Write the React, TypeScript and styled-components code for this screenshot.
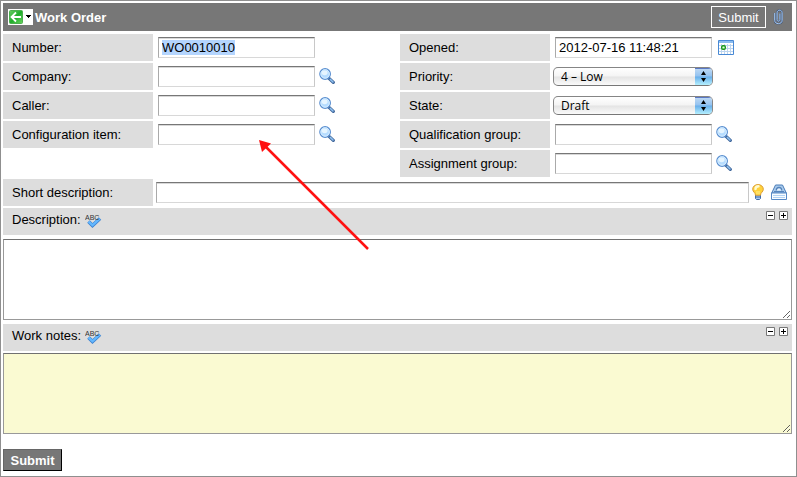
import React, { useEffect, useRef } from 'react';
import styled, { createGlobalStyle, css } from 'styled-components';

const GlobalStyle = createGlobalStyle`
  *, *::before, *::after { box-sizing: border-box; }
  body {
    margin: 0;
    background: #fff;
    color: #000;
    font: 13px/15px "Liberation Sans", Arial, Helvetica, sans-serif;
  }
`;

const Page = styled.main`
  position: relative;
  min-height: 100vh;
  padding: 2px 4px 5px 2px;
  border: 1px solid #8f8f8f;
`;

const TitleBar = styled.header`
  display: flex;
  align-items: center;
  height: 28px;
  margin-bottom: 3px;
  padding: 0 8px 0 5px;
  background: #777;
  color: #fff;
`;

const Title = styled.h1`
  flex: 1;
  margin: 0 0 0 2px;
  font-size: 13px;
  line-height: 15px;
`;

const IconButton = styled.button`
  display: flex;
  flex: none;
  padding: 0;
  border: 0;
  background: none;
  cursor: pointer;
  svg { display: block; }
`;

const BackButton = styled(IconButton)`
  align-items: center;
  width: 25px;
  height: 16px;
  background: #fff;
`;

const HeaderSubmit = styled.button`
  min-width: 55px;
  height: 22px;
  margin-right: 7px;
  padding: 0 6px;
  border: 1px solid #fff;
  background: #777;
  color: #fff;
  font: inherit;
  cursor: pointer;
`;

const Columns = styled.div`
  display: grid;
  grid-template-columns: 1fr 1fr;
  gap: 5px;
  margin-bottom: 2px;
`;

const Column = styled.div`
  display: flex;
  flex-direction: column;
  gap: 2px;
`;

const Row = styled.div<{ $gap?: number }>`
  display: flex;
  align-items: center;
  gap: ${({ $gap = 5 }) => $gap}px;
  min-height: 27px;
  margin-bottom: 0;
`;

const Label = styled.label`
  flex: none;
  width: 150px;
  padding: 6px 9px;
  background: #ddd;
`;

const Field = styled.div<{ $gap?: number; $grow?: boolean }>`
  display: flex;
  align-items: center;
  gap: ${({ $gap = 4 }) => $gap}px;
  ${({ $grow }) => $grow && css`
    flex: 1;
    padding-right: 5px;
  `}
`;

const TextInput = styled.input<{ $grow?: boolean }>`
  width: 157px;
  height: 21px;
  padding: 0 3px;
  border: 1px solid;
  border-color: #777 #c8c8c8 #d8d8d8 #aaa;
  border-radius: 0;
  background: #fff;
  box-shadow: inset 0 1px 0 #d8d8d8;
  color: #000;
  font: inherit;
  outline: 0;
  ${({ $grow }) => $grow && css`flex: 1; min-width: 0;`}
  &::selection { background: #b4d5fe; color: #000; }
`;

const SelectBox = styled.span`
  display: inline-grid;
  grid-template: 17px / 1fr;
  width: 160px;
  height: 19px;
  overflow: hidden;
  border: 1px solid;
  border-color: #858585 #888 #777;
  border-radius: 5px;
  background: linear-gradient(#fff 0%, #f4f4f4 48%, #e4e4e4 52%, #fafafa 100%);
  > * { grid-area: 1 / 1; }
`;

const Select = styled.select`
  appearance: none;
  width: 100%;
  padding: 0 24px 0 7px;
  border: 0;
  background: none;
  color: #000;
  font: 12px/16px "Open Sans", "Noto Sans", sans-serif;
  outline: 0;
`;

const Stepper = styled.span`
  display: flex;
  justify-self: end;
  align-items: center;
  justify-content: center;
  width: 17px;
  box-shadow: inset 0 1px 0 #5a78c4;
  background: linear-gradient(#c0daf4 0%, #94c2ef 48%, #68aeea 52%, #b4f0ff 100%);
  pointer-events: none;
`;

const SectionHead = styled.div`
  display: flex;
  align-items: flex-start;
  height: 27px;
  padding: 4px 4px 0 9px;
  background: #ddd;
`;

const Spelling = styled(IconButton)`
  margin: 2px 0 0 4px;
`;

const Sizers = styled.div`
  display: flex;
  gap: 4px;
  margin: -1px 0 0 auto;
`;

const TextArea = styled.textarea<{ $notes?: boolean }>`
  display: block;
  width: 100%;
  height: 81px;
  margin: ${({ $notes }) => ($notes ? '2px 0 15px' : '4px 0')};
  padding: 3px;
  border: 1px solid #999;
  border-top-color: #707070;
  background: ${({ $notes }) => ($notes ? '#fafad2' : '#fff')};
  font: inherit;
  resize: vertical;
  outline: 0;
`;

const Journals = styled.div`
  margin-top: 2px;
`;

const SubmitButton = styled.button`
  min-width: 59px;
  height: 22px;
  padding: 0 6px;
  border: 1px solid;
  border-color: #666 #000 #000 #666;
  background: #777;
  color: #fff;
  font: bold 13px/15px "Liberation Sans", Arial, sans-serif;
  cursor: pointer;
`;

const Pointer = styled.svg`
  position: absolute;
  left: 256px;
  top: 137px;
  pointer-events: none;
`;

const SearchIcon = () => (
  <svg width="16" height="17" viewBox="0 0 16 17" aria-hidden="true">
    <path d="M9.5 9.8 14.3 14.4" stroke="#3f669a" strokeWidth="3.2" strokeLinecap="round" />
    <path d="M11.3 11.4 14 14" stroke="#8fc0f0" strokeWidth="1.5" strokeLinecap="round" />
    <circle cx="6.1" cy="6" r="5.3" fill="#b5dcff" stroke="#5b8fd0" strokeWidth="1.2" />
    <circle cx="6.1" cy="6" r="4.2" fill="none" stroke="#d9efff" />
    <ellipse cx="5.6" cy="4.8" rx="3" ry="2.4" fill="#e6f5ff" />
  </svg>
);

const BackIcon = () => (
  <svg width="25" height="16" viewBox="0 0 25 16" aria-hidden="true">
    <defs>
      <linearGradient id="green" x1="0" y1="0" x2="1" y2="1">
        <stop offset="0" stopColor="#68cc62" />
        <stop offset=".5" stopColor="#20ad2c" />
        <stop offset="1" stopColor="#69d45e" />
      </linearGradient>
    </defs>
    <rect x="1.5" y="1.5" width="13" height="13" rx="1" fill="url(#green)" stroke="#4cae4e" />
    <path d="M13 8H4M8 3.500 3.500 8 8 12.500" fill="none" stroke="#fff" strokeWidth="1.8" />
    <path d="M18 6h5v1h-1v1h-1v1h-1V8h-1V7h-1z" />
  </svg>
);

const ClipIcon = () => (
  <svg width="11" height="16" viewBox="0 0 11 16" fill="none" aria-hidden="true">
    <path d="M1.7 4v7.4c0 4.3 7.4 4.3 7.4 0V3.7c0-3.3-5-3.3-5 0v7c0 2 2.8 2 2.8 0V4.5" stroke="#46597a" strokeWidth="1.8" />
    <path d="M1.7 4v7.4c0 4.3 7.4 4.3 7.4 0V3.7c0-3.3-5-3.3-5 0v7c0 2 2.8 2 2.8 0V4.5" stroke="#a6cbf5" />
  </svg>
);

const CalendarIcon = () => (
  <svg width="16" height="15" viewBox="0 0 16 15" aria-hidden="true">
    <path d="M.5.5h15v14H.5z" fill="#fff" stroke="#4889d5" />
    <path d="M1 1h14v2H1z" fill="#8bbcf0" />
    <path d="M3.5 4v10M6.5 4v10M9.5 4v10M12.5 4v10M1 5.5h14M1 8.5h14M1 11.5h14" stroke="#bdd5ef" />
    <rect x="3.7" y="5.7" width="3.6" height="3.6" rx="1.2" fill="#dfffd7" stroke="#18961a" strokeWidth="1.4" />
  </svg>
);

const BulbIcon = () => (
  <svg width="12" height="17" viewBox="0 0 12 17" aria-hidden="true">
    <path d="M3.5 11h5v3.5l-1 1h-3l-1-1z" fill="#a9c8ee" stroke="#416caa" />
    <path d="M4 13h4" stroke="#416caa" />
    <path d="M3.5 11.2C3.5 8.5.7 8 .7 5.2.7 2.5 3 .6 6 .6s5.3 1.9 5.3 4.6c0 2.8-2.8 3.3-2.8 6z" fill="#ffd23c" stroke="#dc9d35" />
    <path d="M3.5 5c0-2 1-2.8 3-2.8" fill="none" stroke="#fffbd0" strokeWidth="2.4" strokeLinecap="round" />
    <path d="M5 10.5V7M7 10.5V7" stroke="#fff08b" />
  </svg>
);

const DrawerIcon = () => (
  <svg width="16" height="17" viewBox="0 0 16 17" aria-hidden="true">
    <path d="M4.5 1h7l3.8 8H.7z" fill="#a9caeb" stroke="#4b7db8" />
    <path d="M5.300 6.500c0-4 5.400-4 5.400 0" fill="#e8f4ff" stroke="#5584bc" strokeWidth="1.3" />
    <path d="M3 7.500h10" stroke="#5584bc" />
    <path d="M.5 9h15v6.500H.5z" fill="#f8fcff" stroke="#5689c6" />
    <path d="M2 11.500h12M2 13.500h12" stroke="#b2d2f3" />
  </svg>
);

const SpellIcon = () => (
  <svg width="18" height="15" viewBox="0 0 18 15" aria-hidden="true">
    <path d="m3.5 7.500 4 4 7.500-7" fill="none" stroke="#3d82d0" strokeWidth="3.6" />
    <path d="m3.7 7.600 3.8 3.700 7.200-6.700" fill="none" stroke="#63b8ff" strokeWidth="2.200" />
    <text x="0" y="6" fill="#333" fontFamily="Liberation Sans, sans-serif" fontSize="7">ABC</text>
  </svg>
);

const SizeIcon = ({ plus }: { plus?: boolean }) => (
  <svg width="9" height="9" viewBox="0 0 9 9" aria-hidden="true">
    <path d="M.5.5h8v8h-8z" fill="#fff" stroke="#777" />
    <path d={plus ? 'M2 4.5h5M4.5 2v5' : 'M2 4.5h5'} stroke="#000" />
  </svg>
);

const Lookup = ({ name }: { name: string }) => (
  <IconButton type="button" aria-label={`Look up ${name}`}><SearchIcon /></IconButton>
);

const ReferenceRow = ({ id, name }: { id: string; name: string }) => (
  <Row>
    <Label htmlFor={id}>{name}:</Label>
    <Field>
      <TextInput id={id} />
      <Lookup name={name} />
    </Field>
  </Row>
);

const ChoiceRow = ({ id, name, options }: { id: string; name: string; options: string[] }) => (
  <Row $gap={3}>
    <Label htmlFor={id}>{name}:</Label>
    <SelectBox>
      <Select id={id}>
        {options.map((option) => <option key={option}>{option}</option>)}
      </Select>
      <Stepper>
        <svg width="7" height="11" viewBox="0 0 7 11" aria-hidden="true">
          <path d="M3.5 0 6 4H1zM3.5 11 6 7H1z" />
        </svg>
      </Stepper>
    </SelectBox>
  </Row>
);

const Journal = ({ id, name, notes }: { id: string; name: string; notes?: boolean }) => (
  <section>
    <SectionHead>
      <label htmlFor={id}>{name}:</label>
      <Spelling type="button" aria-label={`Check spelling of ${name}`}><SpellIcon /></Spelling>
      <Sizers>
        <IconButton type="button" aria-label={`Shrink ${name}`}><SizeIcon /></IconButton>
        <IconButton type="button" aria-label={`Expand ${name}`}><SizeIcon plus /></IconButton>
      </Sizers>
    </SectionHead>
    <TextArea id={id} $notes={notes} />
  </section>
);

export default function App() {
  const numberRef = useRef<HTMLInputElement>(null);

  useEffect(() => {
    numberRef.current?.focus();
    numberRef.current?.select();
  }, []);

  return (
    <>
      <GlobalStyle />
      <Page>
        <form onSubmit={(event) => event.preventDefault()}>
          <TitleBar>
            <BackButton type="button" aria-label="Back"><BackIcon /></BackButton>
            <Title>Work Order</Title>
            <HeaderSubmit>Submit</HeaderSubmit>
            <IconButton type="button" aria-label="Attachments"><ClipIcon /></IconButton>
          </TitleBar>
          <Columns>
            <Column>
              <Row>
                <Label htmlFor="number">Number:</Label>
                <TextInput id="number" ref={numberRef} defaultValue="WO0010010" />
              </Row>
              <ReferenceRow id="company" name="Company" />
              <ReferenceRow id="caller" name="Caller" />
              <ReferenceRow id="item" name="Configuration item" />
            </Column>
            <Column>
              <Row>
                <Label htmlFor="opened">Opened:</Label>
                <Field $gap={6}>
                  <TextInput id="opened" defaultValue="2012-07-16 11:48:21" />
                  <IconButton type="button" aria-label="Choose date"><CalendarIcon /></IconButton>
                </Field>
              </Row>
              <ChoiceRow id="priority" name="Priority" options={['4 – Low', '3 – Moderate', '2 – High', '1 – Critical']} />
              <ChoiceRow id="state" name="State" options={['Draft', 'Closed']} />
              <ReferenceRow id="qualification" name="Qualification group" />
              <ReferenceRow id="assignment" name="Assignment group" />
            </Column>
          </Columns>
          <Row $gap={3}>
            <Label htmlFor="short">Short description:</Label>
            <Field $gap={3} $grow>
              <TextInput id="short" $grow />
              <Field $gap={7}>
                <IconButton type="button" aria-label="Suggestions"><BulbIcon /></IconButton>
                <IconButton type="button" aria-label="Search knowledge"><DrawerIcon /></IconButton>
              </Field>
            </Field>
          </Row>
          <Journals>
            <Journal id="description" name="Description" />
            <Journal id="notes" name="Work notes" notes />
          </Journals>
          <SubmitButton>Submit</SubmitButton>
        </form>
        <Pointer width="113" height="113" viewBox="0 0 113 113" aria-hidden="true">
          <path d="M8 8 111 111" stroke="#f11" strokeWidth="2.5" />
          <path d="M2 2 14 5.500 5 14z" fill="#f11" />
        </Pointer>
      </Page>
    </>
  );
}
